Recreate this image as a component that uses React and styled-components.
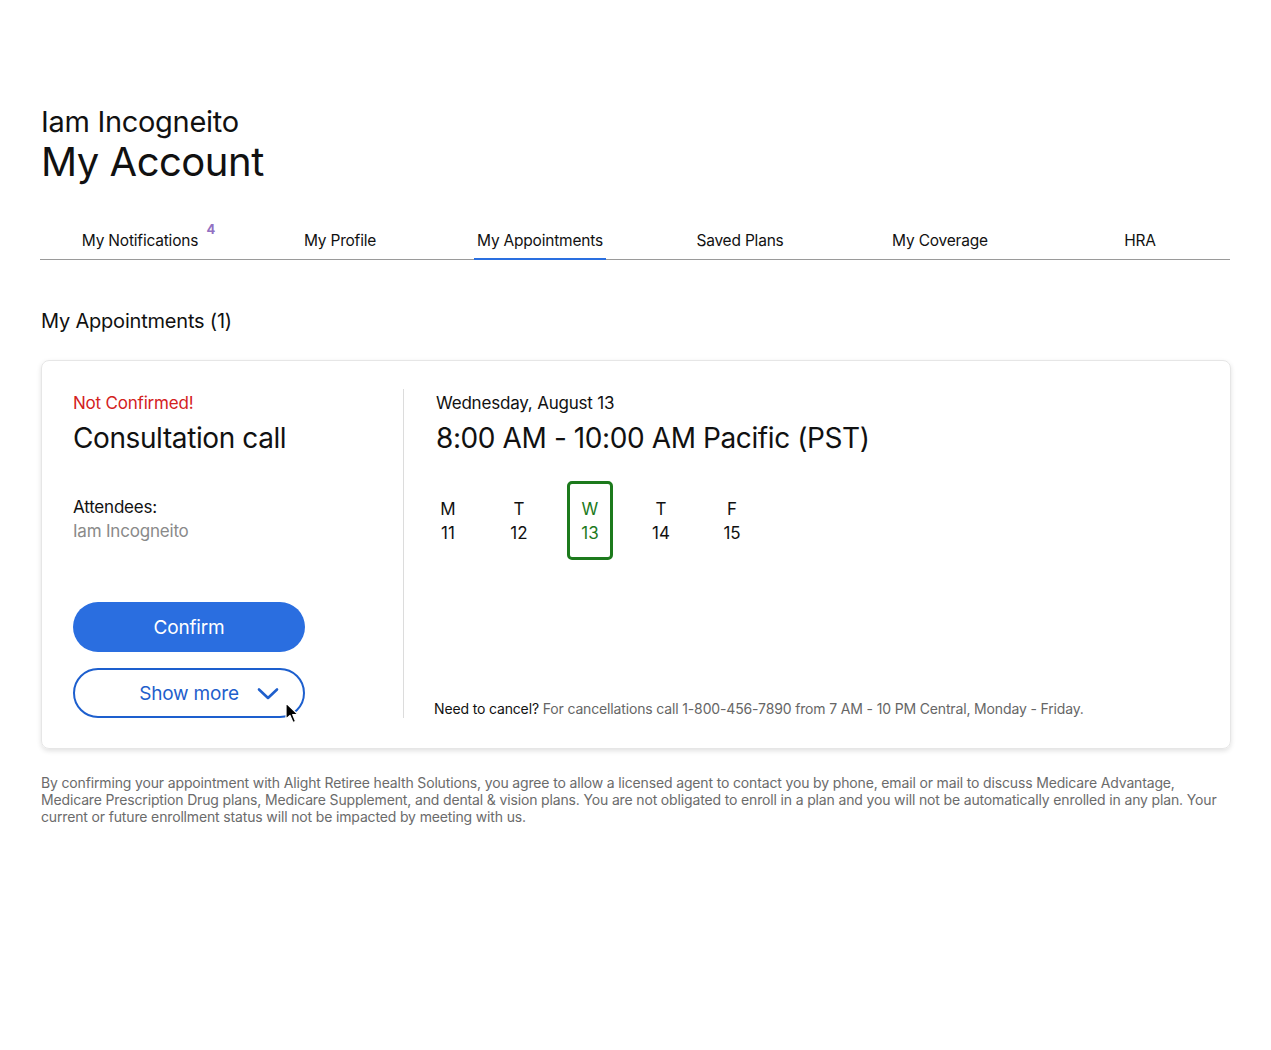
import React from "react";
import styled, { createGlobalStyle } from "styled-components";

const GlobalStyle = createGlobalStyle`
  body {
    margin: 0;
    background: #fff;
    font-family: Inter, "Noto Sans", sans-serif;
    color: #111;
  }
`;

const tabs = [
  { label: "My Notifications", badge: 4 },
  { label: "My Profile" },
  { label: "My Appointments", active: true },
  { label: "Saved Plans" },
  { label: "My Coverage" },
  { label: "HRA" },
];

const days = [
  { d: "M", n: 11 },
  { d: "T", n: 12 },
  { d: "W", n: 13, selected: true },
  { d: "T", n: 14 },
  { d: "F", n: 15 },
];

const Chevron = () => (
  <svg width="22" height="14" viewBox="0 0 22 14" fill="none">
    <path d="M2 2.5 L11 11 L20 2.5" stroke="#1f5fcc" strokeWidth="2.6" strokeLinecap="round" strokeLinejoin="round" />
  </svg>
);

const Cursor = () => (
  <CursorIcon width="16" height="22" viewBox="0 0 16 22">
    <path d="M1 1 L1 17 L5 13.5 L8 20.5 L10.6 19.4 L7.7 12.6 L13 12.6 Z" fill="#000" stroke="#fff" strokeWidth="1.2" strokeLinejoin="round" />
  </CursorIcon>
);

export default function App() {
  return (
    <Page>
      <GlobalStyle />
      <Header>
        <UserName>Iam Incogneito</UserName>
        <Title>My Account</Title>
      </Header>
      <TabBar>
        {tabs.map((t) => (
          <Tab key={t.label}>
            <TabLabel $active={t.active}>
              {t.label}
              {t.badge && <Badge>{t.badge}</Badge>}
            </TabLabel>
          </Tab>
        ))}
      </TabBar>

      <SectionTitle>My Appointments (1)</SectionTitle>

      <Card>
        <LeftCol>
          <Status>Not Confirmed!</Status>
          <BigText>Consultation call</BigText>
          <Label>Attendees:</Label>
          <Muted>Iam Incogneito</Muted>
          <Actions>
            <PrimaryButton>Confirm</PrimaryButton>
            <OutlineButton>
              Show more
              <ChevronWrap>
                <Chevron />
              </ChevronWrap>
              <Cursor />
            </OutlineButton>
          </Actions>
        </LeftCol>
        <RightCol>
          <Label>Wednesday, August 13</Label>
          <BigText>8:00 AM - 10:00 AM Pacific (PST)</BigText>
          <DayRow>
            {days.map((x) => (
              <Day key={x.n} $selected={x.selected}>
                <span>{x.d}</span>
                <span>{x.n}</span>
              </Day>
            ))}
          </DayRow>
          <CancelNote>
            <strong>Need to cancel?</strong> For cancellations call 1-800-456-7890 from 7 AM - 10 PM Central,
            Monday - Friday.
          </CancelNote>
        </RightCol>
      </Card>

      <Disclaimer>
        By confirming your appointment with Alight Retiree health Solutions, you agree to allow a licensed agent to
        contact you by phone, email or mail to discuss Medicare Advantage, Medicare Prescription Drug plans, Medicare
        Supplement, and dental &amp; vision plans. You are not obligated to enroll in a plan and you will not be
        automatically enrolled in any plan. Your current or future enrollment status will not be impacted by meeting
        with us.
      </Disclaimer>
    </Page>
  );
}

const Page = styled.div`
  padding: 104px 40px 40px 41px;
`;

const Header = styled.div`
  display: flex;
  flex-direction: column;
`;

const UserName = styled.div`
  font-size: 29px;
  line-height: 36px;
  letter-spacing: -0.3px;
`;

const Title = styled.h1`
  margin: 0;
  font-size: 40px;
  line-height: 44px;
  font-weight: 400;
  letter-spacing: -0.5px;
`;

const TabBar = styled.div`
  margin-top: 35px;
  display: grid;
  grid-template-columns: repeat(6, 200px);
  margin-left: -1px;
  border-bottom: 1px solid #9a9a9a;
  width: 1190px;
  box-sizing: border-box;
`;

const Tab = styled.div`
  display: flex;
  justify-content: center;
`;

const TabLabel = styled.div`
  position: relative;
  font-size: 15.5px;
  line-height: 20px;
  padding: 12px 3px 7px;
  letter-spacing: -0.2px;
  color: #111;
  border-bottom: 2px solid ${(p) => (p.$active ? "#2a6fe0" : "transparent")};
  margin-bottom: -1px;
`;

const Badge = styled.span`
  position: absolute;
  right: -14px;
  top: 0;
  font-size: 13px;
  font-weight: 700;
  color: #9270c2;
`;

const SectionTitle = styled.h2`
  margin: 49px 0 0;
  font-size: 20px;
  line-height: 24px;
  font-weight: 400;
  letter-spacing: -0.2px;
`;

const Card = styled.div`
  margin-top: 27px;
  width: 1190px;
  box-sizing: border-box;
  border: 1px solid #e6e6e6;
  border-radius: 8px;
  box-shadow: 0 2px 5px rgba(0, 0, 0, 0.12);
  padding: 28px 32px 30px 31px;
  display: flex;
`;

const LeftCol = styled.div`
  width: 298px;
  padding-right: 32px;
  border-right: 1px solid #dcdcdc;
  display: flex;
  flex-direction: column;
`;

const RightCol = styled.div`
  flex: 1;
  padding-left: 32px;
  display: flex;
  flex-direction: column;
`;

const Status = styled.div`
  color: #d3211d;
  font-size: 17px;
  line-height: 29px;
  letter-spacing: -0.2px;
`;

const BigText = styled.div`
  font-size: 28px;
  line-height: 40px;
  letter-spacing: -0.4px;
`;

const Label = styled.div`
  font-size: 17px;
  line-height: 24px;
  letter-spacing: -0.2px;
  &:first-child {
    line-height: 29px;
  }
  ${BigText} + & {
    margin-top: 37px;
  }
`;

const Muted = styled.div`
  font-size: 17px;
  line-height: 24px;
  letter-spacing: -0.2px;
  color: #8a8a8a;
`;

const Actions = styled.div`
  margin-top: 59px;
  display: flex;
  flex-direction: column;
  gap: 16px;
  width: 232px;
`;

const PrimaryButton = styled.button`
  height: 50px;
  border: none;
  border-radius: 25px;
  background: #2a6ee0;
  color: #fff;
  font-family: inherit;
  font-size: 19px;
  letter-spacing: -0.2px;
  cursor: pointer;
`;

const OutlineButton = styled.button`
  position: relative;
  height: 50px;
  border: 2px solid #1d5fce;
  border-radius: 25px;
  background: #fff;
  color: #1f5fcc;
  font-family: inherit;
  font-size: 19px;
  letter-spacing: -0.2px;
  display: flex;
  align-items: center;
  justify-content: center;
  padding: 0;
`;

const ChevronWrap = styled.span`
  position: absolute;
  right: 24px;
  top: 17px;
  display: flex;
`;

const CursorIcon = styled.svg`
  position: absolute;
  right: 2px;
  bottom: -8px;
`;

const DayRow = styled.div`
  margin-top: 23px;
  margin-left: -11px;
  display: flex;
  gap: 25px;
`;

const Day = styled.div`
  width: 46px;
  height: 79px;
  box-sizing: border-box;
  border: 3px solid ${(p) => (p.$selected ? "#1c7a1c" : "transparent")};
  border-radius: 5px;
  color: ${(p) => (p.$selected ? "#1c7a1c" : "#111")};
  display: flex;
  flex-direction: column;
  align-items: center;
  justify-content: center;
  font-size: 17px;
  line-height: 24px;
`;

const CancelNote = styled.div`
  margin-top: auto;
  margin-left: -2px;
  font-size: 14px;
  line-height: 18px;
  color: #666;
  letter-spacing: -0.15px;
  strong {
    font-weight: 400;
    color: #111;
  }
`;

const Disclaimer = styled.p`
  margin: 25px 0 0;
  width: 1190px;
  font-size: 14px;
  line-height: 17px;
  color: #6b6b6b;
  letter-spacing: -0.15px;
`;
